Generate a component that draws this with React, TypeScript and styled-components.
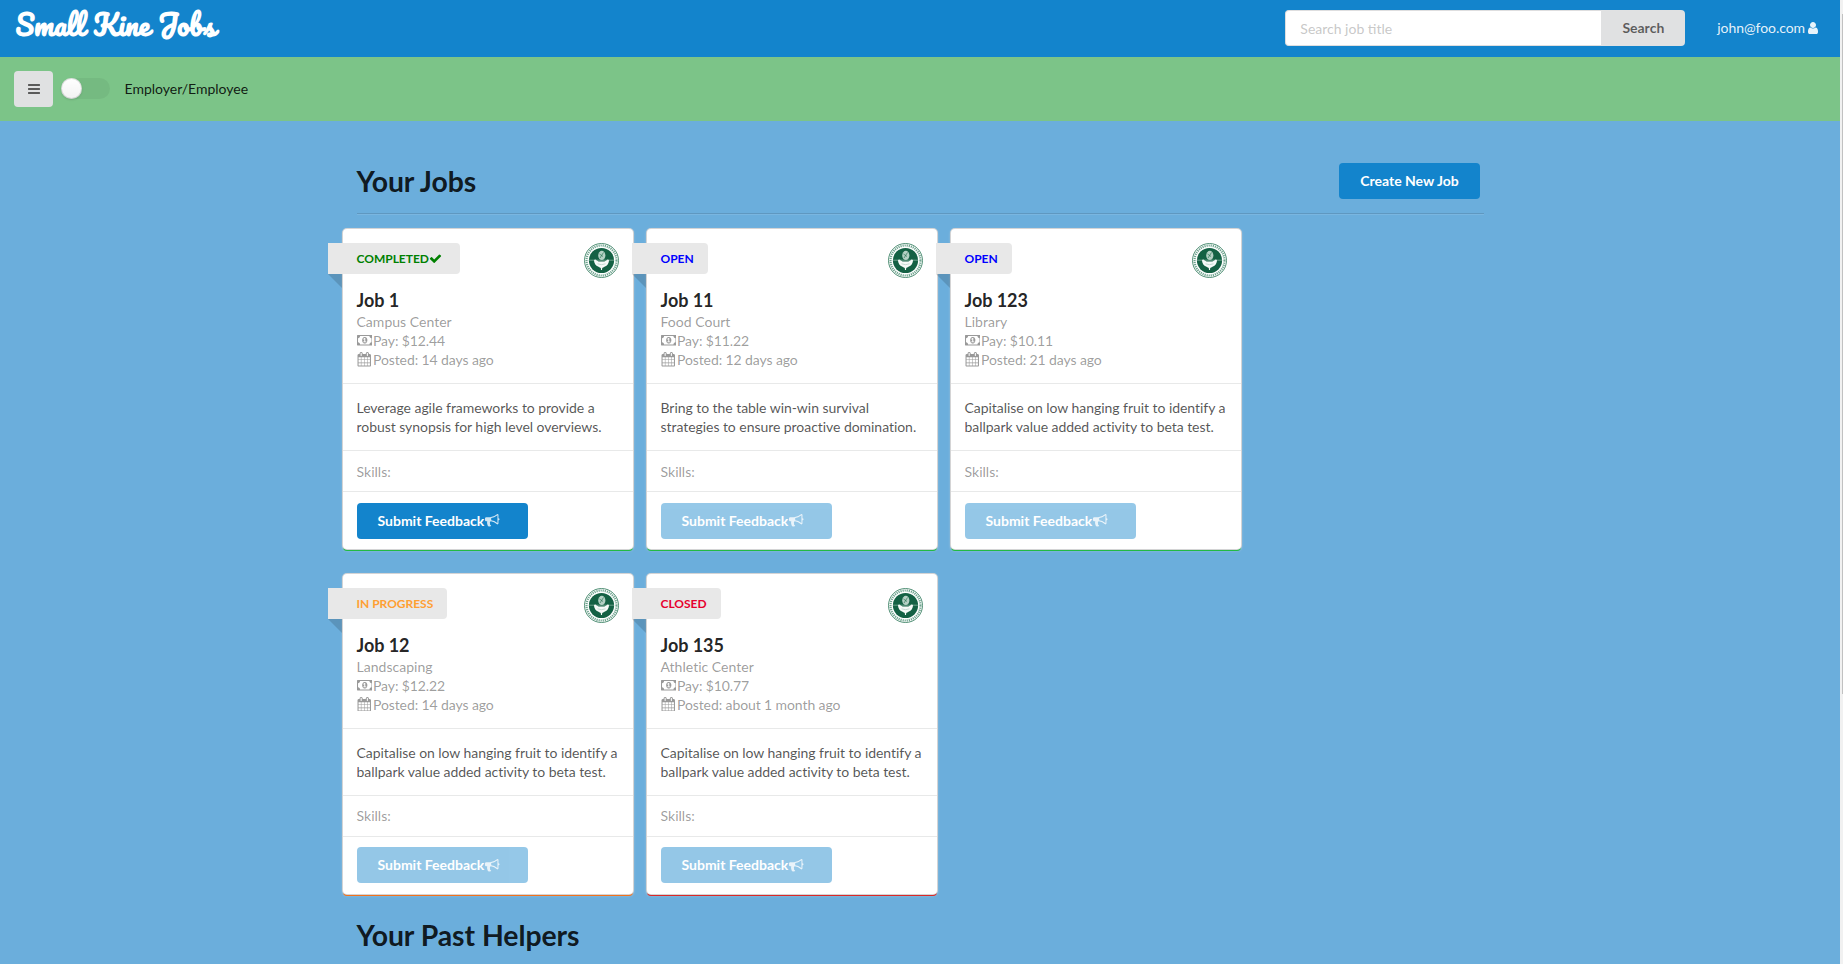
import React from 'react';
import styled, { createGlobalStyle, css } from 'styled-components';

const Global = createGlobalStyle`
  *, *::before, *::after { box-sizing: border-box; }
  html, body { margin: 0; height: 100%; overflow: hidden; }
  body {
    background: #f1f1f1;
    font-family: Lato, 'Helvetica Neue', Arial, sans-serif;
    font-size: 14px;
    line-height: 1.4285em;
    letter-spacing: -0.05px;
    font-variant-ligatures: none;
    color: rgba(0, 0, 0, 0.87);
  }
`;

const Frame = styled.div`
  display: flex;
  width: 1843px;
  height: 964px;
  overflow: hidden;
`;

const Page = styled.div`
  width: 1840px;
  overflow: hidden;
  background: #6baedc;
`;

const ScrollTrack = styled.div`
  width: 3px;
  padding: 14px 0 0 2px;
  background: #f1f1f1;
`;

const ScrollThumb = styled.div`
  height: 680px;
  background: #c1c1c1;
`;

const TopBar = styled.header`
  display: flex;
  align-items: center;
  height: 57px;
  padding: 0 20px 1px 15.5px;
  background: #1384cc;
`;

const Brand = styled.a`
  flex: 1;
  color: #fff;
  font-family: Pacifico, cursive;
  font-size: 27px;
  font-weight: 700;
  line-height: 36px;
  letter-spacing: 0;
  word-spacing: 1.7px;
  padding-bottom: 6px;
  white-space: nowrap;
`;

const SearchBox = styled.form`
  display: flex;
  width: 400px;
  height: 36px;
  margin-right: 32px;
`;

const SearchInput = styled.input`
  flex: 1;
  min-width: 0;
  padding: 0 14px;
  border: 1px solid #dededf;
  border-right: 0;
  border-radius: 4px 0 0 4px;
  background: #fff;
  font: 14px Lato, sans-serif;
  outline: none;
  &::placeholder { color: rgba(191, 191, 191, 0.87); }
`;

const Button = styled.button<{ $tone?: 'primary' | 'grey'; $shape?: 'right' | 'icon' }>`
  display: inline-flex;
  align-items: center;
  justify-content: center;
  height: 36px;
  padding: 0 21px;
  border: 0;
  border-radius: 4px;
  font: 700 14px/14px Lato, sans-serif;
  white-space: nowrap;
  color: ${(p) => (p.$tone === 'grey' ? 'rgba(0,0,0,0.6)' : '#fff')};
  background: ${(p) => (p.$tone === 'grey' ? '#e0e1e2' : '#1384cc')};
  &:disabled { opacity: 0.45; }
  ${(p) => p.$shape === 'right' && css`width: 84px; padding: 0; border-radius: 0 4px 4px 0;`}
  ${(p) => p.$shape === 'icon' && css`width: 39px; padding: 0;`}
`;

const CreateButton = styled(Button)`
  width: 141px;
  padding: 0;
`;

const FeedbackButton = styled(Button)`
  justify-content: flex-start;
  gap: 1px;
  width: 171px;
`;

const UserLink = styled.a`
  display: flex;
  align-items: center;
  gap: 1px;
  letter-spacing: -0.07px;
  color: rgba(255, 255, 255, 0.9);
`;

const RoleBar = styled.div`
  display: flex;
  align-items: center;
  height: 64px;
  padding-left: 14px;
  letter-spacing: 0;
  background: #7cc488;
`;

const Toggle = styled.span`
  width: 49px;
  height: 21px;
  margin: 0 14.5px 1px 8px;
  border-radius: 21px;
  background: rgba(0, 0, 0, 0.05);
  &::before {
    content: '';
    display: block;
    width: 21px;
    height: 21px;
    border-radius: 50%;
    background: #fff linear-gradient(transparent, rgba(0, 0, 0, 0.05));
    box-shadow: 0 1px 2px 0 rgba(34, 36, 38, 0.15), 0 0 0 1px rgba(34, 36, 38, 0.15) inset;
  }
`;

const Content = styled.main`
  width: 1127px;
  margin: 0 auto;
`;

const TitleRow = styled.div`
  display: flex;
  align-items: center;
  justify-content: space-between;
  height: 92px;
  padding: 28px 3.5px 0 0;
`;

const Heading = styled.h1`
  margin: 0;
  padding-top: 1px;
  font-size: 28.4px;
  font-weight: 700;
  line-height: 35px;
`;

const Rule = styled.div`
  border-top: 1px solid rgba(34, 36, 38, 0.15);
  border-bottom: 1px solid rgba(255, 255, 255, 0.1);
`;

const Cards = styled.div`
  display: flex;
  flex-wrap: wrap;
  gap: 24.6px 14px;
  margin: 14px -14px 23.5px;
`;

const Card = styled.article<{ $accent: string }>`
  width: 290px;
  height: 320px;
  border-radius: 4px;
  background: #fff;
  box-shadow: 0 0 0 1px #d4d4d5, 0 2px 0 0 ${(p) => p.$accent}, 0 1px 3px 0 #d4d4d5;
`;

const Section = styled.div<{ $height: number; $top: number }>`
  height: ${(p) => p.$height}px;
  padding: ${(p) => p.$top}px 14px 0;
  & + & { border-top: 1px solid rgba(34, 36, 38, 0.1); }
`;

const CardTop = styled.div`
  display: flex;
  justify-content: space-between;
  align-items: flex-start;
  height: 46px;
`;

const Ribbon = styled.div<{ $color: string }>`
  position: relative;
  display: flex;
  align-items: center;
  height: 31px;
  margin-left: -29px;
  padding: 0 14px 0 29px;
  border-radius: 0 4px 4px 0;
  background: #e8e8e8;
  color: ${(p) => p.$color};
  font-size: 12px;
  font-weight: 700;
  line-height: 19px;
  letter-spacing: -0.02px;
  text-transform: uppercase;
  &::after {
    content: '';
    position: absolute;
    top: 100%;
    left: 0;
    border-style: solid;
    border-width: 0 14px 14px 0;
    border-color: transparent rgba(0, 0, 0, 0.15) transparent transparent;
  }
`;

const JobTitle = styled.h2`
  margin: 0;
  font-size: 18px;
  font-weight: 700;
  line-height: 23px;
`;

const Meta = styled.div<{ $tight?: boolean }>`
  display: flex;
  align-items: center;
  height: 19px;
  line-height: 19px;
  letter-spacing: ${(p) => (p.$tight ? -0.1 : 0.02)}px;
  color: rgba(0, 0, 0, 0.4);
  white-space: nowrap;
`;

const Description = styled.p`
  margin: 0;
  line-height: 19px;
  color: rgba(0, 0, 0, 0.68);
  white-space: nowrap;
`;

const IconSvg = styled.svg<{ $gap?: number; $dim?: boolean }>`
  flex: none;
  display: block;
  margin-right: ${(p) => p.$gap ?? 0}px;
  opacity: ${(p) => (p.$dim ? 0.8 : 1)};
`;

const paths = {
  user: 'M1536 1399q0 109-62.5 187t-150.5 78h-854q-88 0-150.5-78t-62.5-187q0-85 8.5-160.5t31.5-152 58.5-131 94-89 134.5-34.5q131 128 313 128t313-128q76 0 134.5 34.5t94 89 58.5 131 31.5 152 8.5 160.5zm-256-887q0 159-112.5 271.5t-271.5 112.5-271.5-112.5-112.5-271.5 112.5-271.5 271.5-112.5 271.5 112.5 112.5 271.5z',
  check: 'M1671 566q0 40-28 68l-724 724-136 136q-28 28-68 28t-68-28l-136-136-362-362q-28-28-28-68t28-68l136-136q28-28 68-28t68 28l294 295 656-657q28-28 68-28t68 28l136 136q28 28 28 68z',
  bars: 'M1664 1344v128q0 26-19 45t-45 19h-1408q-26 0-45-19t-19-45v-128q0-26 19-45t45-19h1408q26 0 45 19t19 45zm0-512v128q0 26-19 45t-45 19h-1408q-26 0-45-19t-19-45v-128q0-26 19-45t45-19h1408q26 0 45 19t19 45zm0-512v128q0 26-19 45t-45 19h-1408q-26 0-45-19t-19-45v-128q0-26 19-45t45-19h1408q26 0 45 19t19 45z',
  money: 'M768 1152h384v-96h-128v-448h-114l-148 137 77 80q42-37 55-57h2v288h-128v96zm512-256q0 70-21 142t-59.5 134-101.5 101-138 39-138-39-101.5-101-59.5-134-21-142 21-142 59.5-134 101.5-101 138-39 138 39 101.5 101 59.5 134 21 142zm512 256v-512q-106 0-181-75t-75-181h-1152q0 106-75 181t-181 75v512q106 0 181 75t75 181h1152q0-106 75-181t181-75zm128-832v1152q0 26-19 45t-45 19h-1792q-26 0-45-19t-19-45v-1152q0-26 19-45t45-19h1792q26 0 45 19t19 45z',
  calendar: 'M192 1664h288v-288h-288v288zm352 0h320v-288h-320v288zm-352-352h288v-320h-288v320zm352 0h320v-320h-320v320zm-352-384h288v-288h-288v288zm736 736h320v-288h-320v288zm-384-736h320v-288h-320v288zm768 736h288v-288h-288v288zm-384-352h320v-320h-320v320zm-352-864v-288q0-13-9.5-22.5t-22.5-9.5h-64q-13 0-22.5 9.5t-9.5 22.5v288q0 13 9.5 22.5t22.5 9.5h64q13 0 22.5-9.5t9.5-22.5zm736 864h288v-320h-288v320zm-384-384h320v-288h-320v288zm384 0h288v-288h-288v288zm32-480v-288q0-13-9.5-22.5t-22.5-9.5h-64q-13 0-22.5 9.5t-9.5 22.5v288q0 13 9.5 22.5t22.5 9.5h64q13 0 22.5-9.5t9.5-22.5zm384-64v1280q0 52-38 90t-90 38h-1408q-52 0-90-38t-38-90v-1280q0-52 38-90t90-38h128v-96q0-66 47-113t113-47h64q66 0 113 47t47 113v96h384v-96q0-66 47-113t113-47h64q66 0 113 47t47 113v96h128q52 0 90 38t38 90z',
  bullhorn: 'M1664 640q53 0 90.5 37.5t37.5 90.5-37.5 90.5-90.5 37.5v384q0 52-38 90t-90 38q-417-347-812-380-58 19-91 66t-31 100.5 40 92.5q-20 33-23 65.5t6 58 33.5 55 48 50 61.5 50.5q-29 58-111.5 83t-168.5 11.5-132-55.5q-7-23-29.5-87.5t-32-94.5-23-89-15-101 3.5-98.5 22-110.5h-122q-66 0-113-47t-47-113v-192q0-66 47-113t113-47h480q435 0 896-384 52 0 90 38t38 90v384zm-128 604v-954q-394 302-768 343v270q377 42 768 341z',
};

interface IconProps { name: keyof typeof paths; size?: number; gap?: number; dim?: boolean }

function Icon({ name, size = 14, gap, dim }: IconProps) {
  const vw = name === 'money' ? 1920 : 1792;
  return (
    <IconSvg $gap={gap} $dim={dim} width={(size * vw) / 1792} height={size} viewBox={`0 0 ${vw} 1792`} fill="currentColor">
      <path d={paths[name]} />
    </IconSvg>
  );
}

function Seal() {
  return (
    <svg width="35" height="35" viewBox="0 0 35 35">
      <circle cx="17.5" cy="17.5" r="17" fill="#fff" stroke="#3f8468" strokeWidth="0.9" />
      <circle cx="17.5" cy="17.5" r="15" fill="none" stroke="#6fa48f" strokeWidth="2.2" strokeDasharray="1.2 0.9" />
      <circle cx="17.5" cy="17.5" r="12.6" fill="#146144" />
      <path d="M5 17.2H30" stroke="#8fb9a8" strokeWidth="0.7" />
      <ellipse cx="17.8" cy="12.4" rx="3.6" ry="4.6" fill="#b4d0c4" />
      <path d="M16 15l3.500-5.500M15.500 11l3.500 2.500" stroke="#2e7658" strokeWidth="0.7" />
      <path d="M10 17.200q1-1.300 2.700.2 1.800 1.300 4.800 1.200 3 .1 4.800-1.200 1.700-1.500 2.700-.2 0 4.600-4.500 6.600-1.500.7-2.300 1.300l-.2 2h-1l-.2-2q-.8-.6-2.300-1.300-4.500-2-4.500-6.600z" fill="#f6faf8" />
      <path d="M13.500 20.800q4 1.800 8 0" fill="none" stroke="#a5c7b9" strokeWidth="0.6" />
    </svg>
  );
}

const tones = {
  Completed: { color: 'green', accent: '#21ba45' },
  Open: { color: 'blue', accent: '#21ba45' },
  'In Progress': { color: '#ff9f33', accent: '#f2711c' },
  Closed: { color: '#e6002e', accent: '#db2828' },
};

interface Job { status: keyof typeof tones; title: string; place: string; pay: string; posted: string; lines: [string, string] }

const ballpark: [string, string] = ['Capitalise on low hanging fruit to identify a', 'ballpark value added activity to beta test.'];

const jobs: Job[] = [
  { status: 'Completed', title: 'Job 1', place: 'Campus Center', pay: '$12.44', posted: '14 days ago', lines: ['Leverage agile frameworks to provide a', 'robust synopsis for high level overviews.'] },
  { status: 'Open', title: 'Job 11', place: 'Food Court', pay: '$11.22', posted: '12 days ago', lines: ['Bring to the table win-win survival', 'strategies to ensure proactive domination.'] },
  { status: 'Open', title: 'Job 123', place: 'Library', pay: '$10.11', posted: '21 days ago', lines: ballpark },
  { status: 'In Progress', title: 'Job 12', place: 'Landscaping', pay: '$12.22', posted: '14 days ago', lines: ballpark },
  { status: 'Closed', title: 'Job 135', place: 'Athletic Center', pay: '$10.77', posted: 'about 1 month ago', lines: ballpark },
];

function JobCard({ job }: { job: Job }) {
  const done = job.status === 'Completed';
  const tone = tones[job.status];
  return (
    <Card $accent={tone.accent}>
      <Section $height={154} $top={14}>
        <CardTop>
          <Ribbon $color={tone.color}>
            {job.status}
            {done && <Icon name="check" size={13} gap={4.5} />}
          </Ribbon>
          <Seal />
        </CardTop>
        <JobTitle>{job.title}</JobTitle>
        <Meta>{job.place}</Meta>
        <Meta $tight><Icon name="money" size={14.5} gap={1} />Pay: {job.pay}</Meta>
        <Meta $tight><Icon name="calendar" size={14.5} gap={2} />Posted: {job.posted}</Meta>
      </Section>
      <Section $height={67} $top={14}>
        <Description>{job.lines[0]}<br />{job.lines[1]}</Description>
      </Section>
      <Section $height={41} $top={10.5}>
        <Meta>Skills:</Meta>
      </Section>
      <Section $height={58} $top={10.5}>
        <FeedbackButton disabled={!done}>Submit Feedback<Icon name="bullhorn" size={14.5} dim /></FeedbackButton>
      </Section>
    </Card>
  );
}

export default function App() {
  return (
    <>
      <Global />
      <Frame>
        <Page>
          <TopBar>
            <Brand>Small Kine Jobs</Brand>
            <SearchBox>
              <SearchInput placeholder="Search job title" />
              <Button type="button" $tone="grey" $shape="right">Search</Button>
            </SearchBox>
            <UserLink>john@foo.com<Icon name="user" size={14} /></UserLink>
          </TopBar>
          <RoleBar>
            <Button $tone="grey" $shape="icon" aria-label="Menu"><Icon name="bars" /></Button>
            <Toggle />
            Employer/Employee
          </RoleBar>
          <Content>
            <TitleRow>
              <Heading>Your Jobs</Heading>
              <CreateButton>Create New Job</CreateButton>
            </TitleRow>
            <Rule />
            <Cards>
              {jobs.map((job) => <JobCard key={job.title} job={job} />)}
            </Cards>
            <Heading>Your Past Helpers</Heading>
          </Content>
        </Page>
        <ScrollTrack><ScrollThumb /></ScrollTrack>
      </Frame>
    </>
  );
}
